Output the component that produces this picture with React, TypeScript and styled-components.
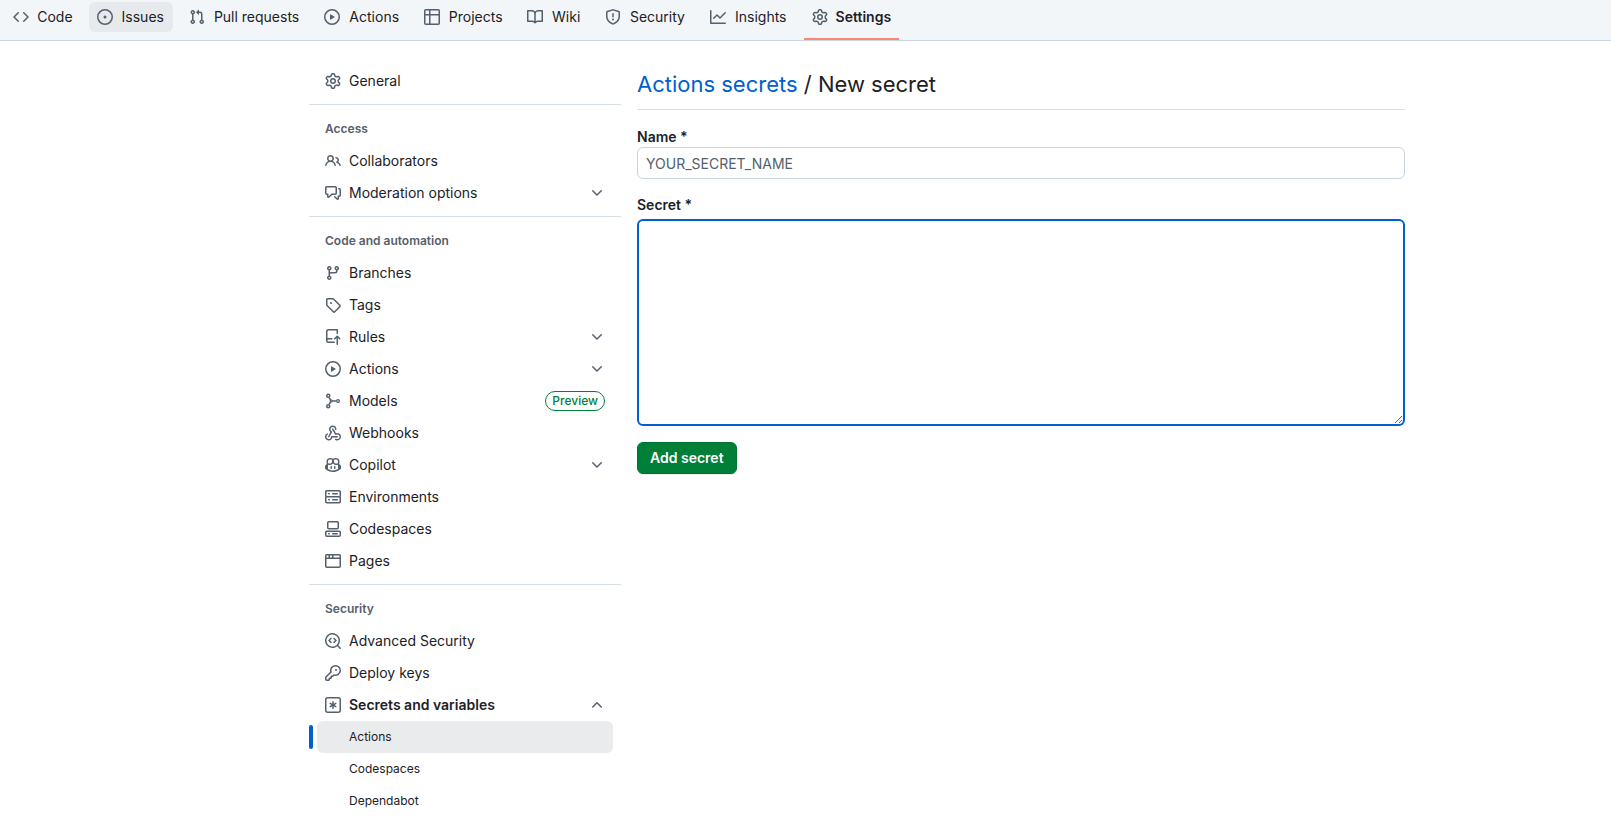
import React from "react";
import styled, { createGlobalStyle, css } from "styled-components";

const GlobalStyle = createGlobalStyle`
  *, *::before, *::after { box-sizing: border-box; }
  body {
    margin: 0;
    background: #ffffff;
    color: #1c2126;
    font-family: Inter, "Liberation Sans", sans-serif;
    font-size: 14px;
    line-height: 20px;
  }
  a { color: inherit; text-decoration: none; }
  ul { list-style: none; margin: 0; padding: 0; }
`;

const icons = {
  code: ["m11.28 3.22 4.25 4.25a.75.75 0 0 1 0 1.06l-4.25 4.25a.749.749 0 0 1-1.275-.326.749.749 0 0 1 .215-.734L13.94 8l-3.72-3.72a.749.749 0 0 1 .326-1.275.749.749 0 0 1 .734.215Zm-6.56 0a.751.751 0 0 1 1.042.018.751.751 0 0 1 .018 1.042L2.06 8l3.72 3.72a.749.749 0 0 1-.326 1.275.749.749 0 0 1-.734-.215L.47 8.53a.75.75 0 0 1 0-1.06Z"],
  issue: [
    "M8 9.5a1.5 1.5 0 1 0 0-3 1.5 1.5 0 0 0 0 3Z",
    "M8 0a8 8 0 1 1 0 16A8 8 0 0 1 8 0ZM1.5 8a6.5 6.5 0 1 0 13 0 6.5 6.5 0 0 0-13 0Z",
  ],
  pullRequest: ["M1.5 3.25a2.25 2.25 0 1 1 3 2.122v5.256a2.251 2.251 0 1 1-1.5 0V5.372A2.25 2.25 0 0 1 1.5 3.25Zm5.677-.177L9.573.677A.25.25 0 0 1 10 .854V2.5h1A2.5 2.5 0 0 1 13.5 5v5.628a2.251 2.251 0 1 1-1.5 0V5a1 1 0 0 0-1-1h-1v1.646a.25.25 0 0 1-.427.177L7.177 3.427a.25.25 0 0 1 0-.354ZM3.75 2.5a.75.75 0 1 0 0 1.5.75.75 0 0 0 0-1.5Zm0 9.5a.75.75 0 1 0 0 1.5.75.75 0 0 0 0-1.5Zm8.25.75a.75.75 0 1 0 1.5 0 .75.75 0 0 0-1.5 0Z"],
  play: ["M8 0a8 8 0 1 1 0 16A8 8 0 0 1 8 0ZM1.5 8a6.5 6.5 0 1 0 13 0 6.5 6.5 0 0 0-13 0Zm4.879-2.773 4.264 2.559a.25.25 0 0 1 0 .428l-4.264 2.559A.25.25 0 0 1 6 10.559V5.442a.25.25 0 0 1 .379-.215Z"],
  table: ["M0 1.75C0 .784.784 0 1.75 0h12.5C15.216 0 16 .784 16 1.75v12.5A1.75 1.75 0 0 1 14.25 16H1.75A1.75 1.75 0 0 1 0 14.25ZM6.5 6.5v8h7.75a.25.25 0 0 0 .25-.25V6.5Zm8-1.5V1.75a.25.25 0 0 0-.25-.25H6.5V5Zm-13 1.5v7.75c0 .138.112.25.25.25H5v-8ZM5 5V1.5H1.75a.25.25 0 0 0-.25.25V5Z"],
  book: ["M0 1.75A.75.75 0 0 1 .75 1h4.253c1.227 0 2.317.59 3 1.501A3.743 3.743 0 0 1 11.006 1h4.245a.75.75 0 0 1 .75.75v10.5a.75.75 0 0 1-.75.75h-4.507a2.25 2.25 0 0 0-1.591.659l-.622.621a.75.75 0 0 1-1.06 0l-.622-.621A2.25 2.25 0 0 0 5.258 13H.75a.75.75 0 0 1-.75-.75Zm7.251 10.324.004-5.073-.002-2.253A2.25 2.25 0 0 0 5.003 2.5H1.5v9h3.757a3.75 3.75 0 0 1 1.994.574ZM8.755 4.75l-.004 7.322a3.752 3.752 0 0 1 1.992-.572H14.5v-9h-3.495a2.25 2.25 0 0 0-2.25 2.25Z"],
  shield: ["M7.467.133a1.748 1.748 0 0 1 1.066 0l5.25 1.68A1.75 1.75 0 0 1 15 3.48V7c0 1.566-.32 3.182-1.303 4.682-.983 1.498-2.585 2.813-5.032 3.855a1.697 1.697 0 0 1-1.33 0c-2.447-1.042-4.049-2.357-5.032-3.855C1.32 10.182 1 8.566 1 7V3.48a1.75 1.75 0 0 1 1.217-1.667Zm.61 1.429a.25.25 0 0 0-.153 0l-5.25 1.68a.25.25 0 0 0-.174.238V7c0 1.358.275 2.666 1.057 3.86.784 1.194 2.121 2.34 4.366 3.297a.196.196 0 0 0 .154 0c2.245-.956 3.582-2.104 4.366-3.298C13.225 9.666 13.5 8.36 13.5 7V3.48a.251.251 0 0 0-.174-.237l-5.25-1.68ZM8.75 4.75v3a.75.75 0 0 1-1.5 0v-3a.75.75 0 0 1 1.5 0ZM9 10.5a1 1 0 1 1-2 0 1 1 0 0 1 2 0Z"],
  graph: ["M1.5 1.75V13.5h13.75a.75.75 0 0 1 0 1.5H.75a.75.75 0 0 1-.75-.75V1.75a.75.75 0 0 1 1.5 0Zm14.28 2.53-5.25 5.25a.75.75 0 0 1-1.06 0L7 7.06 4.28 9.78a.751.751 0 0 1-1.042-.018.751.751 0 0 1-.018-1.042l3.25-3.25a.75.75 0 0 1 1.06 0L10 7.94l4.72-4.72a.751.751 0 0 1 1.042.018.751.751 0 0 1 .018 1.042Z"],
  gear: ["M8 0a8.2 8.2 0 0 1 .701.031C9.444.095 9.99.645 10.16 1.29l.288 1.107c.018.066.079.158.212.224.231.114.454.243.668.386.123.082.233.09.299.071l1.103-.303c.644-.176 1.392.021 1.82.63.27.385.506.792.704 1.218.315.675.111 1.422-.364 1.891l-.814.806c-.049.048-.098.147-.088.294.016.257.016.515 0 .772-.01.147.038.246.088.294l.814.806c.475.469.679 1.216.364 1.891a7.977 7.977 0 0 1-.704 1.217c-.428.61-1.176.807-1.82.63l-1.102-.302c-.067-.019-.177-.011-.3.071a5.909 5.909 0 0 1-.668.386c-.133.066-.194.158-.211.224l-.29 1.106c-.168.646-.715 1.196-1.458 1.26a8.006 8.006 0 0 1-1.402 0c-.743-.064-1.289-.614-1.458-1.26l-.289-1.106c-.018-.066-.079-.158-.212-.224a5.738 5.738 0 0 1-.668-.386c-.123-.082-.233-.09-.299-.071l-1.103.303c-.644.176-1.392-.021-1.82-.63a8.12 8.12 0 0 1-.704-1.218c-.315-.675-.111-1.422.363-1.891l.815-.806c.05-.048.098-.147.088-.294a6.214 6.214 0 0 1 0-.772c.01-.147-.038-.246-.088-.294l-.815-.806C.635 6.045.431 5.298.746 4.623a7.92 7.92 0 0 1 .704-1.217c.428-.61 1.176-.807 1.82-.63l1.102.302c.067.019.177.011.3-.071.214-.143.437-.272.668-.386.133-.066.194-.158.211-.224l.29-1.106C6.009.645 6.556.095 7.299.03 7.53.01 7.764 0 8 0Zm-.571 1.525c-.036.003-.108.036-.137.146l-.289 1.105c-.147.561-.549.967-.998 1.189-.173.086-.34.183-.5.29-.417.278-.97.423-1.529.27l-1.103-.303c-.109-.03-.175.016-.195.045-.22.312-.412.644-.573.99-.014.031-.021.11.059.19l.815.806c.411.406.562.957.53 1.456a4.709 4.709 0 0 0 0 .582c.032.499-.119 1.05-.53 1.456l-.815.806c-.081.08-.073.159-.059.19.162.346.353.677.573.989.02.03.085.076.195.046l1.102-.303c.56-.153 1.113-.008 1.53.27.161.107.328.204.501.29.447.222.85.629.997 1.189l.289 1.105c.029.109.101.143.137.146a6.6 6.6 0 0 0 1.142 0c.036-.003.108-.036.137-.146l.289-1.105c.147-.561.549-.967.998-1.189.173-.086.34-.183.5-.29.417-.278.97-.423 1.529-.27l1.103.303c.109.029.175-.016.195-.045.22-.313.411-.644.573-.99.014-.031.021-.11-.059-.19l-.815-.806c-.411-.406-.562-.957-.53-1.456a4.709 4.709 0 0 0 0-.582c-.032-.499.119-1.05.53-1.456l.815-.806c.081-.08.073-.159.059-.19a6.464 6.464 0 0 0-.573-.989c-.02-.03-.085-.076-.195-.046l-1.102.303c-.56.153-1.113.008-1.53-.27a4.44 4.44 0 0 0-.501-.29c-.447-.222-.85-.629-.997-1.189l-.289-1.105c-.029-.11-.101-.143-.137-.146a6.6 6.6 0 0 0-1.142 0ZM11 8a3 3 0 1 1-6 0 3 3 0 0 1 6 0ZM9.5 8a1.5 1.5 0 1 0-3.001.001A1.5 1.5 0 0 0 9.5 8Z"],
  people: ["M2 5.5a3.5 3.5 0 1 1 5.898 2.549 5.508 5.508 0 0 1 3.034 4.084.75.75 0 1 1-1.482.235 4 4 0 0 0-7.9 0 .75.75 0 0 1-1.482-.236A5.507 5.507 0 0 1 3.102 8.05 3.493 3.493 0 0 1 2 5.5ZM11 4a3.001 3.001 0 0 1 2.22 5.018 5.01 5.01 0 0 1 2.56 3.012.749.749 0 0 1-.885.954.752.752 0 0 1-.549-.514 3.507 3.507 0 0 0-2.522-2.372.75.75 0 0 1-.574-.73v-.352a.75.75 0 0 1 .416-.672A1.5 1.5 0 0 0 11 5.5.75.75 0 0 1 11 4Zm-5.5-.5a2 2 0 1 0-.001 3.999A2 2 0 0 0 5.5 3.5Z"],
  discussion: ["M1.75 1h8.5c.966 0 1.75.784 1.75 1.75v5.5A1.75 1.75 0 0 1 10.25 10H7.061l-2.574 2.573A1.458 1.458 0 0 1 2 11.543V10h-.25A1.75 1.75 0 0 1 0 8.25v-5.5C0 1.784.784 1 1.75 1ZM1.5 2.75v5.5c0 .138.112.25.25.25h1a.75.75 0 0 1 .75.75v2.19l2.72-2.72a.749.749 0 0 1 .53-.22h3.5a.25.25 0 0 0 .25-.25v-5.5a.25.25 0 0 0-.25-.25h-8.5a.25.25 0 0 0-.25.25Zm13 2a.25.25 0 0 0-.25-.25h-.5a.75.75 0 0 1 0-1.5h.5c.966 0 1.75.784 1.75 1.75v5.5A1.75 1.75 0 0 1 14.25 12H14v1.543a1.458 1.458 0 0 1-2.487 1.03L9.22 12.28a.749.749 0 0 1 .326-1.275.749.749 0 0 1 .734.215l2.22 2.22v-2.19a.75.75 0 0 1 .75-.75h1a.25.25 0 0 0 .25-.25Z"],
  branch: ["M9.5 3.25a2.25 2.25 0 1 1 3 2.122V6A2.5 2.5 0 0 1 10 8.5H6a1 1 0 0 0-1 1v1.128a2.251 2.251 0 1 1-1.5 0V5.372a2.25 2.25 0 1 1 1.5 0v1.836A2.493 2.493 0 0 1 6 7h4a1 1 0 0 0 1-1v-.628A2.25 2.25 0 0 1 9.5 3.25Zm-6 0a.75.75 0 1 0 1.5 0 .75.75 0 0 0-1.5 0Zm8.25-.75a.75.75 0 1 0 0 1.5.75.75 0 0 0 0-1.5ZM4.25 12a.75.75 0 1 0 0 1.5.75.75 0 0 0 0-1.5Z"],
  tag: ["M1 7.775V2.75C1 1.784 1.784 1 2.75 1h5.025c.464 0 .91.184 1.238.513l6.25 6.25a1.75 1.75 0 0 1 0 2.474l-5.026 5.026a1.75 1.75 0 0 1-2.474 0l-6.25-6.25A1.752 1.752 0 0 1 1 7.775Zm1.5 0c0 .066.026.13.073.177l6.25 6.25a.25.25 0 0 0 .354 0l5.025-5.025a.25.25 0 0 0 0-.354l-6.25-6.25a.25.25 0 0 0-.177-.073H2.75a.25.25 0 0 0-.25.25ZM6 5a1 1 0 1 1 0 2 1 1 0 0 1 0-2Z"],
  rules: ["M1 2.5A2.5 2.5 0 0 1 3.5 0h8.75a.75.75 0 0 1 .75.75v3.5a.75.75 0 0 1-1.5 0V1.5h-8a1 1 0 0 0-1 1v6.708A2.493 2.493 0 0 1 3.5 9h3.25a.75.75 0 0 1 0 1.5H3.5a1 1 0 0 0 0 2h5.75a.75.75 0 0 1 0 1.5H3.5A2.5 2.5 0 0 1 1 11.5Zm13.23 7.79-1.224-1.224v6.184a.75.75 0 0 1-1.5 0V9.066L10.28 10.29a.75.75 0 0 1-1.06-1.061l2.505-2.504a.75.75 0 0 1 1.06 0L15.29 9.23a.751.751 0 0 1-.018 1.042.751.751 0 0 1-1.042.018Z"],
  model: [
    "M3.25.5a2.25 2.25 0 1 1 0 4.5 2.25 2.25 0 0 1 0-4.5Zm0 1.5a.75.75 0 1 0 0 1.5.75.75 0 0 0 0-1.5Z",
    "M3.25 11a2.25 2.25 0 1 1 0 4.5 2.25 2.25 0 0 1 0-4.5Zm0 1.5a.75.75 0 1 0 0 1.5.75.75 0 0 0 0-1.5Z",
    "M13 6a2 2 0 1 1 0 4 2 2 0 0 1 0-4Zm0 1.3a.7.7 0 1 0 0 1.4.7.7 0 0 0 0-1.4Z",
    "M3.5 4.9 4.8 4.2 6.1 6.2 8 7.25h3.2v1.5H8L6.1 9.8l-1.3 2-1.3-.7L4.7 9V7ZM6.1 7.5v1L7 8Z",
  ],
  webhook: [
    "M5.5 4.25a2.25 2.25 0 0 1 4.5 0 .75.75 0 0 0 1.5 0 3.75 3.75 0 1 0-6.14 2.889l-2.272 4.258a.75.75 0 0 0 1.324.706L7 7.25a.75.75 0 0 0-.309-1.015A2.25 2.25 0 0 1 5.5 4.25Z",
    "M7.364 3.607a.75.75 0 0 1 1.03.257l2.608 4.349a3.75 3.75 0 1 1-.628 6.785.75.75 0 0 1 .752-1.299 2.25 2.25 0 1 0-.033-3.88.75.75 0 0 1-1.03-.256L7.107 4.636a.75.75 0 0 1 .257-1.03Z",
    "M2.9 8.776A.75.75 0 0 1 2.625 9.8 2.25 2.25 0 1 0 6 11.75a.75.75 0 0 1 .75-.751h5.5a.75.75 0 0 1 0 1.5H7.425a3.751 3.751 0 1 1-5.55-3.998.75.75 0 0 1 1.024.274Z",
  ],
  copilot: [
    "M7.998 15.035c-4.562 0-7.873-2.914-7.998-3.749V9.338c.085-.628.677-1.686 1.588-2.065.013-.07.024-.143.036-.218.029-.183.06-.384.126-.612-.201-.508-.254-1.084-.254-1.656 0-.87.128-1.769.693-2.484.579-.733 1.494-1.124 2.724-1.261 1.206-.134 2.262.034 2.944.765.05.053.096.108.139.165.044-.057.094-.112.143-.165.682-.731 1.738-.899 2.944-.765 1.23.137 2.145.528 2.724 1.261.566.715.693 1.614.693 2.484 0 .572-.053 1.148-.254 1.656.066.228.098.429.126.612.012.076.024.148.037.218.924.385 1.522 1.471 1.591 2.095v1.872c0 .766-3.351 3.795-8.002 3.795Zm0-1.485c2.28 0 4.584-1.11 5.002-1.433V7.862l-.023-.116c-.49.21-1.075.291-1.727.291-1.146 0-2.059-.327-2.71-.991A3.222 3.222 0 0 1 8 6.303a3.24 3.24 0 0 1-.544.743c-.65.664-1.563.991-2.71.991-.652 0-1.236-.081-1.727-.291l-.023.116v4.255c.419.323 2.722 1.433 5.002 1.433ZM6.762 2.83c-.193-.206-.637-.413-1.682-.297-1.019.113-1.479.404-1.713.7-.247.312-.369.789-.369 1.554 0 .793.129 1.171.308 1.371.162.181.519.379 1.442.379.853 0 1.339-.235 1.638-.54.315-.322.527-.827.617-1.553.117-.935-.037-1.395-.241-1.614Zm4.155-.297c-1.044-.116-1.488.091-1.681.297-.204.219-.359.679-.242 1.614.091.726.303 1.231.618 1.553.299.305.784.54 1.638.54.922 0 1.28-.198 1.442-.379.179-.2.308-.578.308-1.371 0-.765-.123-1.242-.37-1.554-.233-.296-.693-.587-1.713-.7Z",
    "M6.25 9.037a.75.75 0 0 1 .75.75v1.501a.75.75 0 0 1-1.5 0V9.787a.75.75 0 0 1 .75-.75Zm4.25.75v1.501a.75.75 0 0 1-1.5 0V9.787a.75.75 0 0 1 1.5 0Z",
  ],
  server: ["M1.75 1h12.5c.966 0 1.75.784 1.75 1.75v4c0 .372-.116.717-.314 1 .198.283.314.628.314 1v4a1.75 1.75 0 0 1-1.75 1.75H1.75A1.75 1.75 0 0 1 0 12.75v-4c0-.358.109-.707.314-1a1.739 1.739 0 0 1-.314-1v-4C0 1.784.784 1 1.75 1ZM1.5 2.75v4c0 .138.112.25.25.25h12.5a.25.25 0 0 0 .25-.25v-4a.25.25 0 0 0-.25-.25H1.75a.25.25 0 0 0-.25.25Zm.25 5.75a.25.25 0 0 0-.25.25v4c0 .138.112.25.25.25h12.5a.25.25 0 0 0 .25-.25v-4a.25.25 0 0 0-.25-.25ZM7 4.75A.75.75 0 0 1 7.75 4h4.5a.75.75 0 0 1 0 1.5h-4.5A.75.75 0 0 1 7 4.75ZM7.75 10h4.5a.75.75 0 0 1 0 1.5h-4.5a.75.75 0 0 1 0-1.5ZM3 4.75A.75.75 0 0 1 3.75 4h.5a.75.75 0 0 1 0 1.5h-.5A.75.75 0 0 1 3 4.75ZM3.75 10h.5a.75.75 0 0 1 0 1.5h-.5a.75.75 0 0 1 0-1.5Z"],
  codespaces: [
    "M0 11.25c0-.966.784-1.75 1.75-1.75h12.5c.966 0 1.75.784 1.75 1.75v3A1.75 1.75 0 0 1 14.25 16H1.75A1.75 1.75 0 0 1 0 14.25Zm2-9.5C2 .784 2.784 0 3.75 0h8.5C13.216 0 14 .784 14 1.75v5a1.75 1.75 0 0 1-1.75 1.75h-8.5A1.75 1.75 0 0 1 2 6.75Zm1.75-.25a.25.25 0 0 0-.25.25v5c0 .138.112.25.25.25h8.5a.25.25 0 0 0 .25-.25v-5a.25.25 0 0 0-.25-.25Zm-2 9.5a.25.25 0 0 0-.25.25v3c0 .138.112.25.25.25h12.5a.25.25 0 0 0 .25-.25v-3a.25.25 0 0 0-.25-.25Z",
    "M7 12.75a.75.75 0 0 1 .75-.75h4.5a.75.75 0 0 1 0 1.5h-4.5a.75.75 0 0 1-.75-.75Zm-4 0a.75.75 0 0 1 .75-.75h.5a.75.75 0 0 1 0 1.5h-.5a.75.75 0 0 1-.75-.75Z",
  ],
  browser: ["M0 2.75C0 1.784.784 1 1.75 1h12.5c.966 0 1.75.784 1.75 1.75v10.5A1.75 1.75 0 0 1 14.25 15H1.75A1.75 1.75 0 0 1 0 13.25ZM14.5 6h-13v7.25c0 .138.112.25.25.25h12.5a.25.25 0 0 0 .25-.25Zm-6-3.5v2h6V2.75a.25.25 0 0 0-.25-.25ZM5 2.5v2h2v-2Zm-3.25 0a.25.25 0 0 0-.25.25V4.5h2v-2Z"],
  codescan: [
    "M8.47 4.97a.75.75 0 0 0 0 1.06L9.94 7.5 8.47 8.97a.75.75 0 1 0 1.06 1.06l2-2a.75.75 0 0 0 0-1.06l-2-2a.75.75 0 0 0-1.06 0ZM6.53 6.03a.75.75 0 0 0-1.06-1.06l-2 2a.75.75 0 0 0 0 1.06l2 2a.75.75 0 1 0 1.06-1.06L5.06 7.5l1.47-1.47Z",
    "M12.246 13.307a7.501 7.501 0 1 1 1.06-1.06l2.474 2.473a.749.749 0 1 1-1.06 1.06ZM1.5 7.5a6.002 6.002 0 0 0 3.608 5.504 6.002 6.002 0 0 0 6.486-1.117.748.748 0 0 1 .292-.293A6 6 0 1 0 1.5 7.5Z",
  ],
  key: ["M10.5 0a5.499 5.499 0 1 1-1.288 10.848l-.932.932a.749.749 0 0 1-.53.22H7v.75a.749.749 0 0 1-.22.53l-.5.5a.749.749 0 0 1-.53.22H5v.75a.749.749 0 0 1-.22.53l-.5.5a.749.749 0 0 1-.53.22h-2A1.75 1.75 0 0 1 0 14.25v-2c0-.199.079-.389.22-.53l4.932-4.932A5.5 5.5 0 0 1 10.5 0Zm-4 5.5c-.001.431.069.86.205 1.269a.75.75 0 0 1-.181.768L1.5 12.56v1.69c0 .138.112.25.25.25h1.69l.06-.06v-1.19a.75.75 0 0 1 .75-.75h1.19l.06-.06v-1.19a.75.75 0 0 1 .75-.75h1.19l1.023-1.025a.75.75 0 0 1 .768-.18A4 4 0 1 0 6.5 5.5ZM11 6a1 1 0 1 1 0-2 1 1 0 0 1 0 2Z"],
  asterisk: [
    "M0 2.75A2.75 2.75 0 0 1 2.75 0h10.5A2.75 2.75 0 0 1 16 2.75v10.5A2.75 2.75 0 0 1 13.25 16H2.75A2.75 2.75 0 0 1 0 13.25ZM2.75 1.5c-.69 0-1.25.56-1.25 1.25v10.5c0 .69.56 1.25 1.25 1.25h10.5c.69 0 1.25-.56 1.25-1.25V2.75c0-.69-.56-1.25-1.25-1.25Z",
    "M8 4a.75.75 0 0 1 .75.75V6.7l1.69-.975a.75.75 0 0 1 .75 1.3L9.5 8l1.69.976a.75.75 0 0 1-.75 1.298L8.75 9.3v1.951a.75.75 0 0 1-1.5 0V9.299l-1.69.976a.75.75 0 0 1-.75-1.3L6.5 8l-1.69-.975a.75.75 0 0 1 .75-1.3l1.69.976V4.75A.75.75 0 0 1 8 4Z",
  ],
  chevronDown: ["M12.78 5.22a.749.749 0 0 1 0 1.06l-4.25 4.25a.749.749 0 0 1-1.06 0L3.22 6.28a.749.749 0 1 1 1.06-1.06L8 8.939l3.72-3.719a.749.749 0 0 1 1.06 0Z"],
  chevronUp: ["M3.22 10.53a.749.749 0 0 1 0-1.06l4.25-4.25a.749.749 0 0 1 1.06 0l4.25 4.25a.749.749 0 1 1-1.06 1.06L8 6.811 4.28 10.53a.749.749 0 0 1-1.06 0Z"],
};

type IconName = keyof typeof icons;

const IconSvg = styled.svg`
  flex: none;
  display: block;
  width: 16px;
  height: 16px;
  fill: #55606c;
`;

const Icon = ({ name }: { name: IconName }) => (
  <IconSvg viewBox="0 0 16 16" aria-hidden="true">
    {icons[name].map((d) => (
      <path key={d} d={d} />
    ))}
  </IconSvg>
);

/* Repository tabs */

const RepoNav = styled.nav`
  background: #f3f6f9;
  border-bottom: 1px solid #cdd6de;
  overflow: hidden;
`;

const TabList = styled.ul`
  display: flex;
  gap: 8px;
  padding: 2px 5px 0;
`;

const TabItem = styled.li<{ $selected?: boolean }>`
  padding-bottom: 6px;
  border-bottom: 2px solid ${(p) => (p.$selected ? "#fd8571" : "transparent")};
`;

const TabLink = styled.a<{ $hovered?: boolean; $selected?: boolean }>`
  display: flex;
  align-items: center;
  gap: 8px;
  height: 30px;
  padding: 0 8px;
  border-radius: 6px;
  white-space: nowrap;
  background: ${(p) => (p.$hovered ? "#e7eaed" : "transparent")};
  font-weight: ${(p) => (p.$selected ? 600 : 400)};
`;

/* Reserves the width of the bold label, so that selecting a tab moves nothing */
const TabLabel = styled.span`
  display: flex;
  flex-direction: column;
  align-items: center;
  &::after {
    content: attr(data-label);
    height: 0;
    overflow: hidden;
    visibility: hidden;
    font-weight: 600;
  }
`;

/* Settings sidebar */

const Page = styled.div`
  display: grid;
  grid-template-columns: 3fr minmax(0, 1096px) 2fr;
`;

const Columns = styled.div`
  grid-column: 2;
  display: flex;
  gap: 16px;
  padding-top: 24px;
`;

const Sidebar = styled.nav`
  flex: 0 0 312px;
`;

const Group = styled.section`
  & + & {
    margin-top: 7px;
    padding-top: 8px;
    border-top: 1px solid #d8e0e7;
  }
`;

const GroupTitle = styled.h2`
  margin: 0;
  padding: 6px 16px;
  font-size: 12px;
  line-height: 20px;
  font-weight: 600;
  color: #55606c;
`;

const rowStyle = css`
  display: flex;
  align-items: center;
  gap: 8px;
  width: calc(100% - 16px);
  height: 32px;
  margin: 0 8px;
  padding: 0 8px;
  border: 0;
  border-radius: 6px;
  background: none;
  color: inherit;
  font: inherit;
  text-align: left;
`;

const RowLink = styled.a`
  ${rowStyle}
`;

const RowButton = styled.button<{ $open?: boolean }>`
  ${rowStyle}
  font-weight: ${(p) => (p.$open ? 600 : 400)};
`;

const RowText = styled.span`
  flex: 1;
`;

const SubItem = styled.li`
  position: relative;
`;

const SubLink = styled.a<{ $current?: boolean }>`
  ${rowStyle}
  padding-left: 32px;
  font-size: 12px;
  background: ${(p) => (p.$current ? "#e9ebed" : "transparent")};
`;

const CurrentBar = styled.span`
  position: absolute;
  left: 0;
  top: 4px;
  width: 4px;
  height: 24px;
  border-radius: 6px;
  background: #0060d0;
`;

const Badge = styled.span`
  height: 20px;
  padding: 0 6px;
  border: 1px solid #007f38;
  border-radius: 10px;
  color: #007f38;
  font-size: 12px;
  line-height: 18px;
  font-weight: 500;
`;

/* Secret form */

const Main = styled.main`
  flex: 1;
  min-width: 0;
`;

const Title = styled.h1`
  margin: 0 0 17px;
  padding: 2px 0 8px;
  border-bottom: 1px solid #d8dee4;
  font-size: 22px;
  line-height: 34px;
  font-weight: 400;
`;

const TitleLink = styled.a`
  && { color: #0060d0; }
`;

const Label = styled.label`
  display: block;
  font-weight: 600;
`;

const Field = styled.div`
  margin-bottom: 16px;
`;

const TextInput = styled.input`
  display: block;
  width: 100%;
  height: 32px;
  padding: 0 8px;
  border: 1px solid #cad4dc;
  border-radius: 6px;
  background: #ffffff;
  color: #1c2126;
  font: inherit;
  &::placeholder { color: #55606c; opacity: 1; }
`;

const TextArea = styled.textarea`
  display: block;
  width: 100%;
  height: 207px;
  margin-top: 4px;
  padding: 4px 7px;
  border: 2px solid #0060d0;
  border-radius: 6px;
  outline: 0;
  resize: vertical;
  font: inherit;
`;

const SubmitButton = styled.button`
  height: 32px;
  padding: 0 12px;
  border: 1px solid #007533;
  border-radius: 6px;
  background: #007f38;
  box-shadow: 0 1px 0 rgba(31, 35, 40, 0.1);
  color: #ffffff;
  font: inherit;
  font-weight: 600;
`;

type Tab = { label: string; icon: IconName; hovered?: boolean; selected?: boolean };

const tabs: Tab[] = [
  { label: "Code", icon: "code" },
  { label: "Issues", icon: "issue", hovered: true },
  { label: "Pull requests", icon: "pullRequest" },
  { label: "Actions", icon: "play" },
  { label: "Projects", icon: "table" },
  { label: "Wiki", icon: "book" },
  { label: "Security", icon: "shield" },
  { label: "Insights", icon: "graph" },
  { label: "Settings", icon: "gear", selected: true },
];

type Entry = {
  label: string;
  icon: IconName;
  expandable?: boolean;
  badge?: string;
  children?: { label: string; current?: boolean }[];
};

const groups: { title?: string; entries: Entry[] }[] = [
  { entries: [{ label: "General", icon: "gear" }] },
  {
    title: "Access",
    entries: [
      { label: "Collaborators", icon: "people" },
      { label: "Moderation options", icon: "discussion", expandable: true },
    ],
  },
  {
    title: "Code and automation",
    entries: [
      { label: "Branches", icon: "branch" },
      { label: "Tags", icon: "tag" },
      { label: "Rules", icon: "rules", expandable: true },
      { label: "Actions", icon: "play", expandable: true },
      { label: "Models", icon: "model", badge: "Preview" },
      { label: "Webhooks", icon: "webhook" },
      { label: "Copilot", icon: "copilot", expandable: true },
      { label: "Environments", icon: "server" },
      { label: "Codespaces", icon: "codespaces" },
      { label: "Pages", icon: "browser" },
    ],
  },
  {
    title: "Security",
    entries: [
      { label: "Advanced Security", icon: "codescan" },
      { label: "Deploy keys", icon: "key" },
      {
        label: "Secrets and variables",
        icon: "asterisk",
        expandable: true,
        children: [
          { label: "Actions", current: true },
          { label: "Codespaces" },
          { label: "Dependabot" },
        ],
      },
    ],
  },
];

const SidebarEntry = ({ label, icon, expandable, badge, children }: Entry) => (
  <li>
    {expandable ? (
      <RowButton type="button" $open={!!children} aria-expanded={!!children}>
        <Icon name={icon} />
        <RowText>{label}</RowText>
        <Icon name={children ? "chevronUp" : "chevronDown"} />
      </RowButton>
    ) : (
      <RowLink href="#">
        <Icon name={icon} />
        <RowText>{label}</RowText>
        {badge && <Badge>{badge}</Badge>}
      </RowLink>
    )}
    {children && (
      <ul>
        {children.map((c) => (
          <SubItem key={c.label}>
            {c.current && <CurrentBar />}
            <SubLink href="#" $current={c.current} aria-current={c.current ? "page" : undefined}>
              {c.label}
            </SubLink>
          </SubItem>
        ))}
      </ul>
    )}
  </li>
);

export default function App() {
  return (
    <>
      <GlobalStyle />
      <RepoNav aria-label="Repository">
        <TabList>
          {tabs.map((t) => (
            <TabItem key={t.label} $selected={t.selected}>
              <TabLink href="#" $hovered={t.hovered} $selected={t.selected}>
                <Icon name={t.icon} />
                <TabLabel data-label={t.label}>{t.label}</TabLabel>
              </TabLink>
            </TabItem>
          ))}
        </TabList>
      </RepoNav>
      <Page>
        <Columns>
          <Sidebar aria-label="Repository settings">
            {groups.map((g, i) => (
              <Group key={i}>
                {g.title && <GroupTitle>{g.title}</GroupTitle>}
                <ul>
                  {g.entries.map((e) => (
                    <SidebarEntry key={e.label} {...e} />
                  ))}
                </ul>
              </Group>
            ))}
          </Sidebar>
          <Main>
            <Title>
              <TitleLink href="#">Actions secrets</TitleLink> / New secret
            </Title>
            <form onSubmit={(e) => e.preventDefault()}>
              <Field>
                <Label htmlFor="secret-name">Name *</Label>
                <TextInput id="secret-name" type="text" placeholder="YOUR_SECRET_NAME" />
              </Field>
              <Field>
                <Label htmlFor="secret-value">Secret *</Label>
                <TextArea id="secret-value" />
              </Field>
              <SubmitButton type="submit">Add secret</SubmitButton>
            </form>
          </Main>
        </Columns>
      </Page>
    </>
  );
}
